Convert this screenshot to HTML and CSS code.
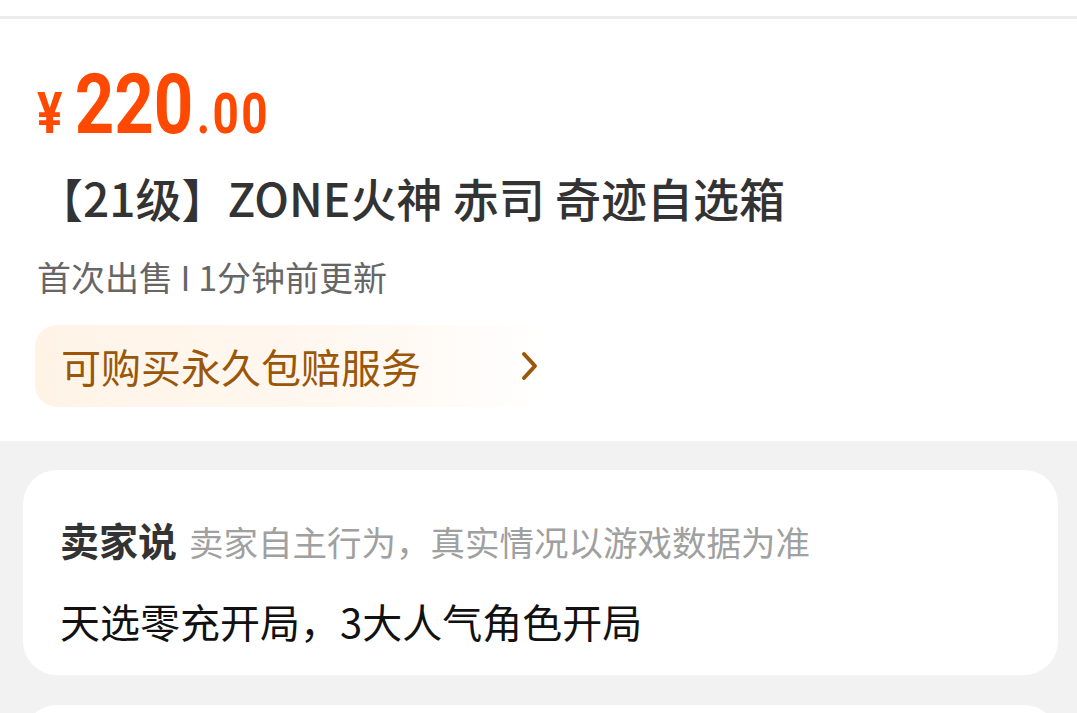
FILE: index.html
```html
<!DOCTYPE html>
<html lang="zh-CN">
<head>
  <meta charset="UTF-8">
  <meta name="viewport" content="width=device-width, initial-scale=1.0">
  <title>商品详情</title>
  <link rel="stylesheet" href="styles.css">
</head>
<body>
  <div class="top-bar"></div>

  <section class="product">
    <div class="price">
      <span class="yen">¥</span>
      <span class="int">220</span>
      <span class="dec">.00</span>
    </div>
    <h1 class="title">【21级】ZONE火神 赤司 奇迹自选箱</h1>
    <p class="meta">首次出售 I 1分钟前更新</p>
    <a class="service" href="#">
      <span>可购买永久包赔服务</span>
      <svg class="chevron" width="18" height="30" viewBox="0 0 18 30">
        <path d="M3 3 L14 15 L3 27" fill="none" stroke="currentColor" stroke-width="4" stroke-linecap="round" stroke-linejoin="round"/>
      </svg>
    </a>
  </section>

  <main class="content">
    <div class="card">
      <div class="card-head">
        <span class="card-label">卖家说</span>
        <span class="card-hint">卖家自主行为，真实情况以游戏数据为准</span>
      </div>
      <p class="card-text">天选零充开局，3大人气角色开局</p>
    </div>
    <div class="card next"></div>
  </main>
</body>
</html>
```

FILE: styles.css
```css
body {
  margin: 0;
  font-family: "Noto Sans CJK SC", "Noto Sans", sans-serif;
  background-color: #f2f2f2;
  overflow: hidden;
}

.top-bar {
  height: 16px;
  background-color: white;
  border-bottom: 3px solid #ececec;
}

.product {
  background-color: white;
  padding: 44px 37px 34px;
}

/* price digits are a condensed face, so squeeze the row */
.price {
  display: flex;
  align-items: baseline;
  height: 84px;
  color: #ff4800;
  font-family: Roboto, "Liberation Sans", sans-serif;
  font-weight: 700;
  line-height: 84px;
  transform: scaleX(0.82);
  transform-origin: left;
}

.price .yen {
  font-size: 58px;
  line-height: 1;
  margin-right: 15px;
}

.price .int {
  font-size: 84px;
}

.price .dec {
  font-size: 56px;
  line-height: 1;
  margin-left: 4px;
  letter-spacing: 3px;
}

.title {
  margin: 20px 0 0;
  font-size: 46px;
  line-height: 60px;
  font-weight: 500;
  color: #333;
}

.meta {
  margin: 25px 0 0;
  font-size: 34px;
  line-height: 50px;
  color: #666;
}

.service {
  display: flex;
  align-items: center;
  justify-content: space-between;
  box-sizing: border-box;
  width: 512px;
  height: 82px;
  margin: 23px 0 0 -2px;
  padding: 0 8px 0 26px;
  border-radius: 22px;
  background: linear-gradient(to right, #fff3e6, #fff9f3 70%, #ffffff);
  color: #9a570a;
  font-size: 40px;
  text-decoration: none;
}

.chevron {
  display: block;
}

.content {
  padding: 29px 19px 0 23px;
}

.card {
  background-color: white;
  border-radius: 34px;
  padding: 41px 37px 26px;
}

.card.next {
  margin-top: 30px;
  height: 80px;
  padding: 0;
}

.card-head {
  display: flex;
  align-items: baseline;
  line-height: 56px;
}

.card-label {
  font-size: 39px;
  font-weight: 700;
  color: #333;
}

.card-hint {
  margin-left: 12px;
  font-size: 34.5px;
  color: #a0a0a0;
}

.card-text {
  margin: 24px 0 0;
  font-size: 40px;
  line-height: 56px;
  color: #111;
}
```
